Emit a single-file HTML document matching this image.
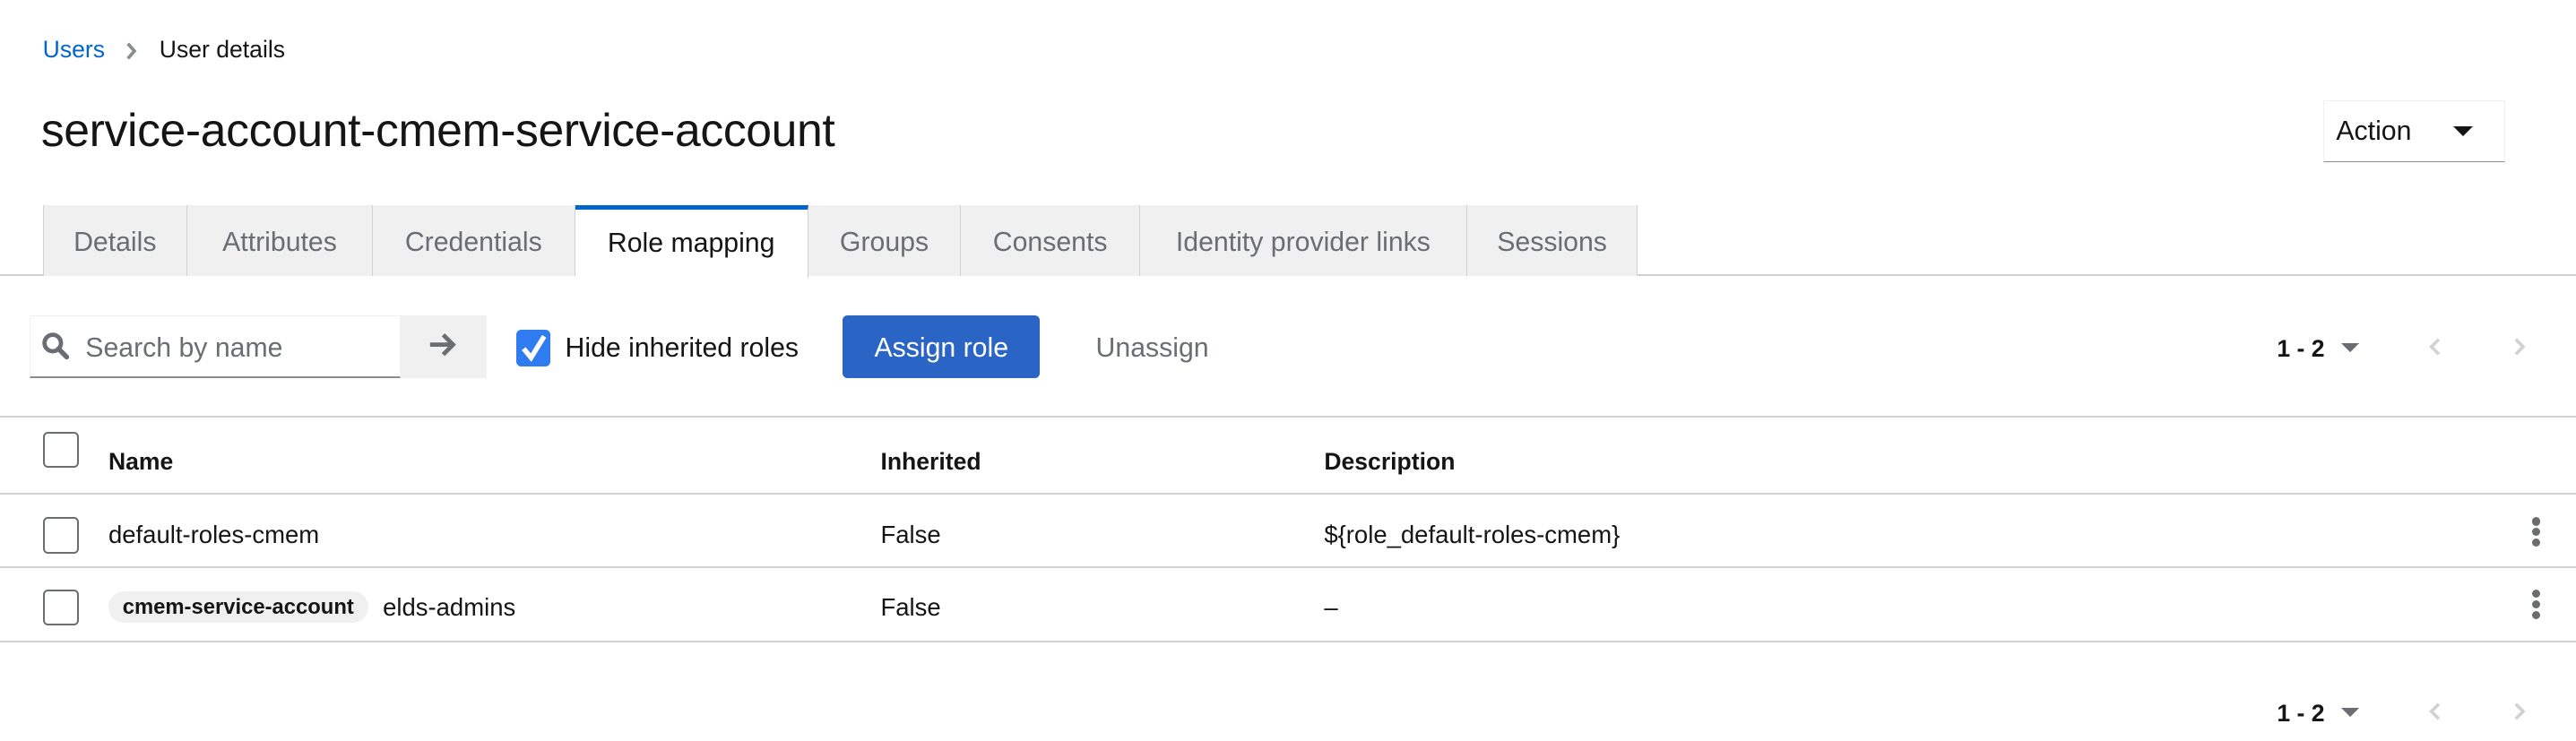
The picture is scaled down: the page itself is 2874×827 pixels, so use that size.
<!DOCTYPE html>
<html><head><meta charset="utf-8">
<style>
html,body{margin:0;padding:0;background:#fff;}
body{width:1568px;height:451px;zoom:1.83291;position:relative;overflow:hidden;font-family:"Liberation Sans",sans-serif;color:#151515;}
.a{position:absolute;white-space:nowrap;}
.tab{position:absolute;top:125px;height:43px;background:#f0f0f0;border-right:1px solid #d2d2d2;box-sizing:border-box;font-size:16.5px;color:#6a6e73;text-align:center;line-height:46px;}
.line{position:absolute;left:0;width:1568px;height:1px;background:#d2d2d2;}
.cb{position:absolute;width:20px;height:20px;border:1.5px solid #6a6e73;border-radius:3px;box-sizing:border-box;background:#fff;}
.t{font-size:15px;}
.h{font-size:14.5px;font-weight:bold;}
.kebab{position:absolute;width:5px;}
.kebab i{display:block;width:5px;height:5px;border-radius:50%;background:#6a6e73;margin-bottom:1.5px;}
</style></head><body>
<div class="a" style="left:26px;top:22px;font-size:14.5px;color:#0066cc">Users</div>
<svg class="a" style="left:76px;top:25px" width="8" height="12" viewBox="0 0 8 12"><path d="M2 1.5 L6 6 L2 10.5" stroke="#8a8d90" stroke-width="2" fill="none"/></svg>
<div class="a" style="left:97px;top:22px;font-size:14.5px">User details</div>
<div class="a" style="left:25px;top:63px;font-size:28.2px;font-weight:500;letter-spacing:-0.2px">service-account-cmem-service-account</div>
<div class="a" style="left:1414px;top:61px;width:111px;height:38px;box-sizing:border-box;border:1px solid #f0f0f0;border-bottom:1px solid #8a8d90"></div>
<div class="a" style="left:1422px;top:71px;font-size:16.5px">Action</div>
<svg class="a" style="left:1493px;top:77px" width="12" height="7"><path d="M0 0 L12 0 L6 6Z" fill="#151515"/></svg>

<div class="line" style="top:167px"></div>
<div class="tab" style="left:26px;width:88px;border-left:1px solid #d2d2d2">Details</div>
<div class="tab" style="left:114px;width:113px">Attributes</div>
<div class="tab" style="left:227px;width:123px">Credentials</div>
<div class="tab" style="left:350px;width:142px;background:#fff;color:#151515;border-top:3px solid #0066cc;line-height:42px;height:44px">Role mapping</div>
<div class="tab" style="left:492px;width:93px">Groups</div>
<div class="tab" style="left:585px;width:109px">Consents</div>
<div class="tab" style="left:694px;width:199px">Identity provider links</div>
<div class="tab" style="left:893px;width:104px">Sessions</div>

<div class="a" style="left:18px;top:192px;width:226px;height:38px;box-sizing:border-box;border:1px solid #f0f0f0;border-bottom:1.5px solid #8a8d90"></div>
<svg class="a" style="left:25px;top:202px" width="18" height="18" viewBox="0 0 18 18"><circle cx="7" cy="7" r="5" stroke="#6a6e73" stroke-width="2.6" fill="none"/><path d="M10.5 10.5 L15.5 15.5" stroke="#6a6e73" stroke-width="3" stroke-linecap="round"/></svg>
<div class="a" style="left:52px;top:203px;font-size:16.5px;color:#6a6e73">Search by name</div>
<div class="a" style="left:244px;top:192px;width:52px;height:38px;background:#f0f0f0"></div>
<svg class="a" style="left:261px;top:202px" width="18" height="16" viewBox="0 0 18 16"><path d="M1 8 L15 8 M9 2 L15 8 L9 14" stroke="#6a6e73" stroke-width="2.6" fill="none"/></svg>
<div class="a" style="left:314px;top:201px;width:21px;height:22px;background:#2f7bf0;border-radius:3px"></div>
<svg class="a" style="left:314px;top:201px" width="21" height="22" viewBox="0 0 21 22"><path d="M4.5 11.5 L9 17 L17 4" stroke="#fff" stroke-width="3" fill="none"/></svg>
<div class="a" style="left:344px;top:203px;font-size:16.5px">Hide inherited roles</div>
<div class="a" style="left:513px;top:192px;width:120px;height:38px;background:#2a64c5;border-radius:3px;color:#fff;font-size:16.5px;text-align:center;line-height:40px">Assign role</div>
<div class="a" style="left:667px;top:203px;font-size:16.5px;color:#6a6e73">Unassign</div>

<div class="a" style="left:1386px;top:204px;font-size:14.5px;font-weight:bold">1 - 2</div>
<svg class="a" style="left:1425px;top:209px" width="11" height="6"><path d="M0 0 L11 0 L5.5 5.5Z" fill="#6a6e73"/></svg>
<svg class="a" style="left:1478px;top:205px" width="8" height="12"><path d="M6.5 1.5 L2 6 L6.5 10.5" stroke="#d2d2d2" stroke-width="2" fill="none"/></svg>
<svg class="a" style="left:1530px;top:205px" width="8" height="12"><path d="M1.5 1.5 L6 6 L1.5 10.5" stroke="#d2d2d2" stroke-width="2" fill="none"/></svg>

<div class="line" style="top:253px"></div>
<div class="cb" style="left:26px;top:263px;height:22px;width:22px"></div>
<div class="a h" style="left:66px;top:273px">Name</div>
<div class="a h" style="left:536px;top:273px">Inherited</div>
<div class="a h" style="left:806px;top:273px">Description</div>
<div class="line" style="top:300px"></div>

<div class="cb" style="left:26px;top:315px;width:22px;height:22px"></div>
<div class="a t" style="left:66px;top:317px">default-roles-cmem</div>
<div class="a t" style="left:536px;top:317px">False</div>
<div class="a t" style="left:806px;top:317px">${role_default-roles-cmem}</div>
<div class="kebab" style="left:1541px;top:315px"><i></i><i></i><i></i></div>
<div class="line" style="top:345px"></div>

<div class="cb" style="left:26px;top:359px;width:22px;height:22px"></div>
<div class="a" style="left:66px;top:360px;height:19px;width:158px;background:#f0f0f0;border-radius:10px;font-size:13px;font-weight:bold;text-align:center;line-height:20px">cmem-service-account</div>
<div class="a t" style="left:233px;top:361px">elds-admins</div>
<div class="a t" style="left:536px;top:361px">False</div>
<div class="a t" style="left:806px;top:361px">–</div>
<div class="kebab" style="left:1541px;top:359px"><i></i><i></i><i></i></div>
<div class="line" style="top:390px"></div>

<div class="a" style="left:1386px;top:426px;font-size:14.5px;font-weight:bold">1 - 2</div>
<svg class="a" style="left:1425px;top:431px" width="11" height="6"><path d="M0 0 L11 0 L5.5 5.5Z" fill="#6a6e73"/></svg>
<svg class="a" style="left:1478px;top:427px" width="8" height="12"><path d="M6.5 1.5 L2 6 L6.5 10.5" stroke="#d2d2d2" stroke-width="2" fill="none"/></svg>
<svg class="a" style="left:1530px;top:427px" width="8" height="12"><path d="M1.5 1.5 L6 6 L1.5 10.5" stroke="#d2d2d2" stroke-width="2" fill="none"/></svg>
</body></html>
